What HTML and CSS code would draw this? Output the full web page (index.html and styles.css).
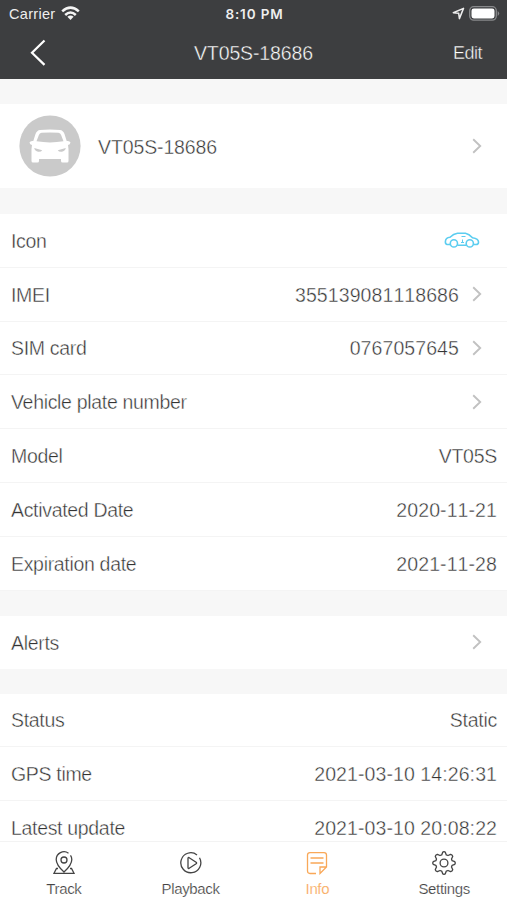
FILE: index.html
```html
<!DOCTYPE html>
<html lang="en">
<head>
<meta charset="utf-8">
<title>Device info</title>
<link rel="stylesheet" href="styles.css">
</head>
<body>
<svg class="defs" width="0" height="0">
  <symbol id="chevron" viewBox="0 0 10 16"><path d="M1.2 1.3 8.2 8l-7 6.7" fill="none" stroke="#c1c1c1" stroke-width="1.9"/></symbol>
</svg>
<div class="screen">
  <header class="header">
    <div class="status">
      <div class="carrier"><span>Carrier</span>
        <svg width="19" height="15" viewBox="0 0 19 15" fill="none" stroke="#f4f4f4" stroke-width="2.5"><path d="M1.2 5.400Q9.500-2.200 17.800 5.400M4.200 9Q9.500 4 14.800 9"/><path d="M9.500 14 6.400 10.800Q9.500 8.200 12.600 10.800Z" fill="#f4f4f4" stroke="none"/></svg>
      </div>
      <div class="clock">8:10 PM</div>
      <div class="power">
        <svg width="13" height="13" viewBox="0 0 13 13" fill="none" stroke="#eee" stroke-width="1.5" stroke-linejoin="round"><path d="M1.3 5.7 11.5 1.4 7.4 11.6 6.7 6.3Z"/></svg>
        <svg width="31" height="15" viewBox="0 0 31 15"><rect x=".7" y=".7" width="26.6" height="13.4" rx="4" fill="none" stroke="#88898b" stroke-width="1.3"/><rect x="2.5" y="2.4" width="23" height="10" rx="2.3" fill="#fff"/><path d="M28.700 5v5q3-2.500 0-5" fill="#88898b"/></svg>
      </div>
    </div>
    <nav class="navbar">
      <svg class="back" width="18" height="28" viewBox="0 0 18 28"><path d="M16.500 1.500 4 13.700 16.500 25.900" fill="none" stroke="#fff" stroke-width="2.200"/></svg>
      <h1 class="title">VT05S-18686</h1>
      <span class="edit">Edit</span>
    </nav>
  </header>

  <main class="content">
    <section class="group profile">
      <svg width="62" height="62" viewBox="0 0 62 62"><circle cx="31" cy="31" r="30.600" fill="#cacaca"/><path fill="#fff" d="M10.500 27.500q.800-2 3.800-1.500L16.500 19q1.500-3.700 4.500-4Q31 14 41 15q3 .300 4.500 4l2.200 7q3-.500 3.800 1.500-.300 2.300-2.500 2.500l.500 4v12q0 1.500-1.500 1.500h-4.500q-1.500 0-1.500-1.500v-2h-22v2q0 1.500-1.500 1.500h-4.500q-1.500 0-1.500-1.500V34l.500-4q-2.200-.200-2.500-2.500Z"/><path fill="#cacaca" d="m17.500 26.300 2.400-6.300q.700-2 2.600-2.200 8.500-.800 17 0 1.900.200 2.600 2.200l2.400 6.300q-13.500 2.200-27 0ZM15.200 33l8 2.300q-1 1.800-4 1.500-3.300-.500-4-3.800ZM46.800 33l-8 2.300q1 1.800 4 1.500 3.300-.500 4-3.800Z"/></svg>
      <span class="name">VT05S-18686</span>
      <svg class="chev"><use href="#chevron"/></svg>
    </section>

    <section class="group">
      <div class="row"><span>Icon</span>
        <svg class="car" width="36" height="17" viewBox="0 0 36 17" fill="none" stroke="#5bcdf0" stroke-width="1.600"><path d="M6 12.500H3Q1.200 12 1.400 9.500 1.600 5.700 6 5.300 9.500 1.700 13.500 1.300h8q3.500.700 7 4.500 6 .900 6 4.200.1 2.500-2.500 2.500h-2M13.500 13.200h8.500"/><circle cx="9.900" cy="11.400" r="3.600"/><circle cx="25.800" cy="11.400" r="3.600"/><path d="M17.500 4.500h4M18.500 7.500v2.500M17 10.500h3" stroke-width="1"/></svg>
      </div>
      <div class="row"><span>IMEI</span><span class="value">355139081118686</span><svg class="chev"><use href="#chevron"/></svg></div>
      <div class="row"><span>SIM card</span><span class="value">0767057645</span><svg class="chev"><use href="#chevron"/></svg></div>
      <div class="row"><span>Vehicle plate number</span><svg class="chev"><use href="#chevron"/></svg></div>
      <div class="row"><span>Model</span><span class="value word">VT05S</span></div>
      <div class="row"><span>Activated Date</span><span class="value">2020-11-21</span></div>
      <div class="row"><span>Expiration date</span><span class="value">2021-11-28</span></div>
    </section>

    <section class="group">
      <div class="row single"><span>Alerts</span><svg class="chev"><use href="#chevron"/></svg></div>
    </section>

    <section class="group">
      <div class="row"><span>Status</span><span class="value word">Static</span></div>
      <div class="row"><span>GPS time</span><span class="value">2021-03-10 14:26:31</span></div>
      <div class="row"><span>Latest update</span><span class="value">2021-03-10 20:08:22</span></div>
    </section>
  </main>

  <footer class="tabs">
    <div class="tab"><svg viewBox="0 0 24 24"><path d="M16.500 2.200A7.800 7.800 0 0 0 4.200 8.500q0 5.500 7.800 12.500Q19.800 14 19.800 8.500q0-2.500-1.300-4.200M6 17.500H4.500L2 22.300h20l-2.500-4.800H18"/><circle cx="12" cy="9" r="3"/></svg><span>Track</span></div>
    <div class="tab"><svg viewBox="0 0 24 24"><path d="M18 3.900A10 10 0 1 0 20.500 6.800"/><path d="M9 7.300v9.400q0 1.200 1.200.6l6.900-4.500q1-.800 0-1.600L10.200 6.700Q9 6.100 9 7.300Z"/></svg><span>Playback</span></div>
    <div class="tab active"><svg viewBox="0 0 24 24"><path d="M11 22.500H5q-2.500 0-2.500-2.500V4Q2.500 1.600 5 1.600h14q2.500 0 2.500 2.400v12l-6.500 6.500v-6.500h6.500M5.500 7h13M5.500 12h13"/></svg><span>Info</span></div>
    <div class="tab"><svg viewBox="0 0 24 24"><path stroke-linejoin="round" d="M12 .7 13.300 1.200 14.300 3.900 16 4.500 18.600 3.300 20 4 20.700 5.400 19.500 8 20.100 9.700 22.800 10.700 23.300 12 22.800 13.300 20.100 14.300 19.500 16 20.700 18.600 20 20 18.600 20.700 16 19.500 14.300 20.100 13.300 22.800 12 23.300 10.700 22.800 9.700 20.100 8 19.500 5.400 20.700 4 20 3.300 18.600 4.500 16 3.900 14.300 1.200 13.300 .7 12 1.200 10.700 3.900 9.700 4.500 8 3.300 5.400 4 4 5.400 3.300 8 4.500 9.700 3.900 10.700 1.200Z"/><circle cx="12" cy="12" r="3.900"/></svg><span>Settings</span></div>
  </footer>
</div>
</body>
</html>
```
FILE: styles.css
```css
* { box-sizing: border-box; }
body { margin: 0; background: #f7f7f7; font-family: "Liberation Sans", Arial, sans-serif; color: #333; }
svg { display: block; flex: none; }
.defs { position: absolute; }
.screen { width: 507px; height: 900px; display: flex; flex-direction: column; overflow: hidden; }
.header { flex: none; height: 79px; background: #3d3e40; color: #fff; }
.status { height: 27px; padding: 0 7px 0 9px; display: grid; grid-template-columns: 1fr auto 1fr; align-items: center; color: #eee; }
.carrier { display: flex; align-items: center; gap: 6px; font-size: 14.500px; letter-spacing: .3px; }
.clock { font: 600 13.500px Inter, sans-serif; letter-spacing: .85px; }
.power { display: flex; align-items: center; justify-content: flex-end; gap: 4px; }
.navbar { height: 52px; padding: 0 25px 0 28px; display: grid; grid-template-columns: 1fr auto 1fr; align-items: center; }
.title, .edit { margin: 0; font-weight: 400; -webkit-text-stroke: .4px #3d3e40; }
.title { padding-right: 3px; font-size: 19.500px; letter-spacing: -.12px; }
.edit { justify-self: end; font-size: 18px; letter-spacing: -.5px; padding-top: 1px; }
.content { flex: 1; min-height: 0; overflow: hidden; padding-top: 25px; display: flex; flex-direction: column; gap: 25px; }
.group { flex: none; background: #fff; }
.profile { height: 84px; margin-bottom: 1px; padding: 0 25px 0 19px; display: flex; align-items: center; }
.name { margin-left: 17px; padding-top: 2px; flex: 1; font-size: 19.500px; letter-spacing: -.12px; -webkit-text-stroke: .4px #fff; }
.row { height: 53.800px; padding: 0 10px 0 11px; display: flex; align-items: center; border-bottom: 1px solid #f4f4f4; font-size: 19.500px; letter-spacing: -.32px; -webkit-text-stroke: .4px #fff; }
.row > span { padding-top: 2px; }
.row.single { height: 53px; border: 0; }
.value { margin-left: auto; letter-spacing: .09px; font-kerning: none; }
.value.word { letter-spacing: -.25px; font-kerning: normal; }
.chev { width: 10px; height: 16px; margin-left: auto; }
.row .chev { margin-right: 15px; }
.value + .chev { margin-left: 13px; }
.car { margin-left: auto; margin-right: 17px; }
.tabs { flex: none; height: 59px; background: #fff; border-top: 1px solid #f3f3f3; display: grid; grid-template-columns: repeat(4, 1fr); }
.tab { display: flex; flex-direction: column; align-items: center; padding: 9px 0 0 1px; gap: 5px; font-size: 15px; line-height: 18px; letter-spacing: -.35px; color: #444; }
.tab svg { width: 24px; height: 24px; fill: none; stroke: currentColor; stroke-width: 1.300; }
.tab span { -webkit-text-stroke: .2px #fff; }
.tab.active { color: #f9a858; }
```
